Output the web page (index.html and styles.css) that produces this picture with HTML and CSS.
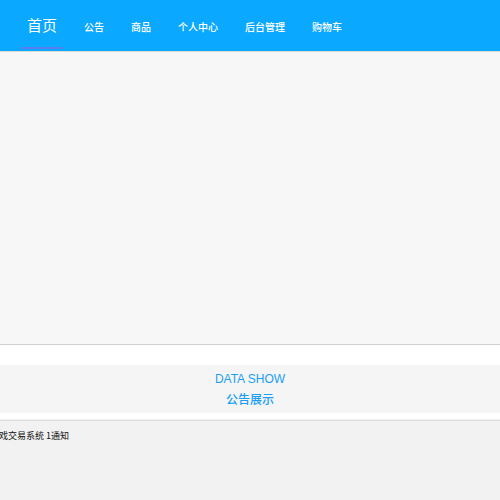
FILE: index.html
```html
<!DOCTYPE html>
<html lang="zh-CN">
<head>
<meta charset="utf-8">
<title>首页</title>
<link rel="stylesheet" href="styles.css">
</head>
<body>
<header class="header">
  <nav class="nav">
    <a class="nav-item active">首页</a>
    <a class="nav-item">公告</a>
    <a class="nav-item">商品</a>
    <a class="nav-item">个人中心</a>
    <a class="nav-item">后台管理</a>
    <a class="nav-item">购物车</a>
  </nav>
</header>
<section class="banner"></section>
<section class="section-title">
  <div class="title-en">DATA SHOW</div>
  <div class="title-cn">公告展示</div>
</section>
<footer class="notice">
  <div class="notice-text">戏交易系统 1通知</div>
</footer>
</body>
</html>
```
FILE: styles.css
```css
html, body {
  margin: 0;
  padding: 0;
  background: #ffffff;
  font-family: "Liberation Sans", "Noto Sans CJK SC", sans-serif;
}
.header {
  height: 51px;
  background: #0aa8ff;
  border-bottom: 1px solid #dcdcdc;
}
.nav {
  display: flex;
  align-items: flex-start;
  gap: 27px;
  padding-left: 21px;
}
.nav-item {
  box-sizing: border-box;
  height: 49px;
  padding-top: 4px;
  display: flex;
  align-items: center;
  color: #ffffff;
  font-size: 10px;
  font-weight: 500;
  line-height: 14px;
  font-family: "Noto Sans CJK SC", sans-serif;
  white-space: nowrap;
}
.nav-item.active {
  font-size: 15px;
  font-weight: 400;
  padding-top: 3px;
  padding-left: 6px;
  padding-right: 6px;
  margin-right: -6px;
  border-bottom: 2px solid #5a7bf2;
}
.banner {
  height: 292px;
  background: #f7f7f7;
  border-bottom: 1px solid #cfcfcf;
  margin-bottom: 20px;
}
.section-title {
  height: 48px;
  box-sizing: border-box;
  padding-top: 5px;
  background: #f5f5f5;
  text-align: center;
  color: #1a9ff5;
  font-size: 12px;
  line-height: 19px;
  margin-bottom: 7px;
}
.title-cn {
  font-family: "Noto Sans CJK SC", sans-serif;
  font-weight: 500;
}
.notice {
  border-top: 1px solid #dddddd;
  box-shadow: 0 -1px 1px rgba(0,0,0,0.05);
  background: #f2f2f2;
  min-height: 80px;
  padding-top: 7px;
  overflow: hidden;
}
.notice-text {
  font-family: "Noto Sans CJK SC", sans-serif;
  font-size: 9px;
  line-height: 16px;
  color: #111111;
  white-space: nowrap;
  text-indent: -1px;
}
```
